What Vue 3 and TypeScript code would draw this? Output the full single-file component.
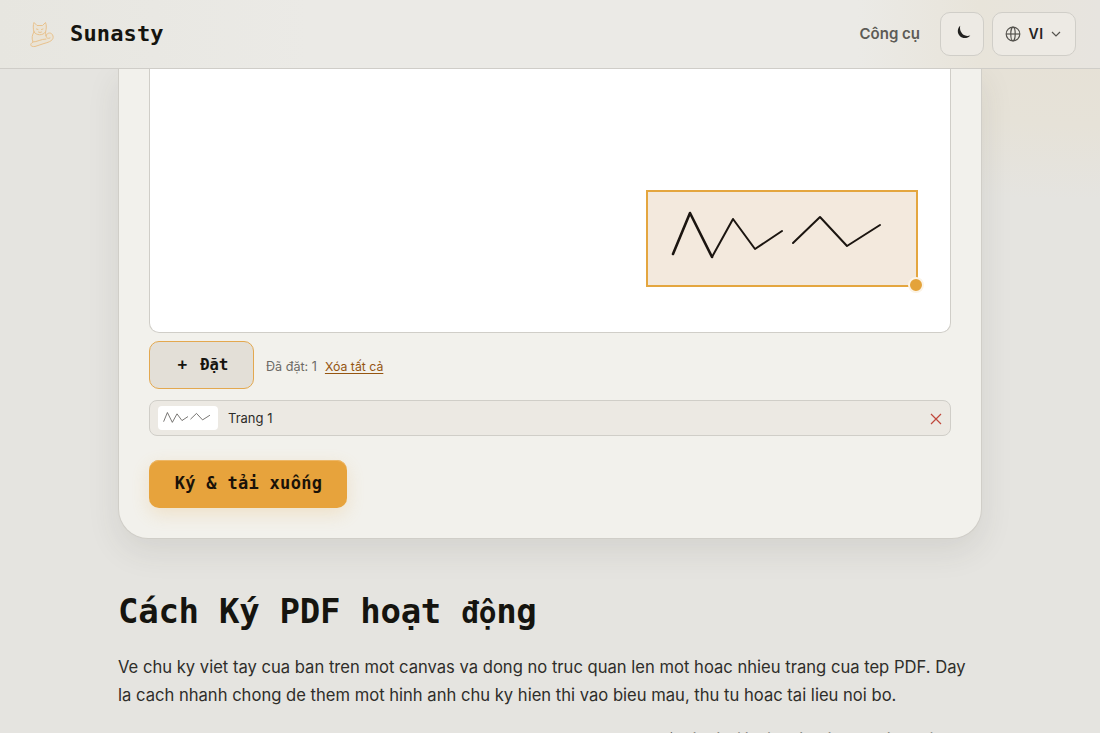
<script setup lang="ts">
const signature: string[] = [
  'M25 62 L42 21 L64 65',
  'M64 65 L85 27 L107 57 L134 39',
  'M145 51 L172 25 L199 54 L232 33',
]
</script>

<template>
  <div class="page">
    <header class="bar">
      <a class="brand">
        <svg class="cat" viewBox="0 0 36 36" fill="none" stroke="#e9b672" stroke-width="1" stroke-linejoin="round" stroke-linecap="round">
          <path fill="#ebe3d3" d="M10 16 C9 13 9 9 10 6.500 L13 9.500 H18.500 L21.500 6.500 C22.700 9 22.500 13 21.500 16 L22 20 C23 16 28 16 29 20 C30 24 26 26 20 27.500 L11 30.500 C6 31 5.500 28 9 26 C7.500 22 8 19 10 16Z" />
          <path d="M10 16 C12 19.500 19 20 21.500 16 M9 26 C13 26 17 23 22 23 M22 20 C22 22 24 23 26 22 M12.500 13 L14 13.500 M19 13 L17.500 13.500 M14.500 16 L16 16.500 L17.500 16" />
        </svg>
        <span>Sunasty</span>
      </a>
      <nav class="nav">
        <a class="tools">Công cụ</a>
        <button class="btn moon" aria-label="Theme">
          <svg width="16" height="16" viewBox="0 0 16 16"><path d="M4.200 .8 C1.200 3.500 1 8.200 3.800 11 C6.800 14 11.500 13.600 14.300 10.400 C11.300 11.500 8.200 10.700 6.300 8.700 C4.200 6.500 3.600 3.500 4.200 .8Z" fill="#22211f" /></svg>
        </button>
        <button class="btn lang">
          <svg width="16" height="16" viewBox="0 0 16 16" fill="none" stroke="#55534e" stroke-width="1.200"><circle cx="8" cy="8" r="6.800" /><ellipse cx="8" cy="8" rx="2.200" ry="6.800" /><path d="M1.200 8H14.800" /></svg>
          <span>VI</span>
          <svg width="10" height="10" viewBox="0 0 10 10" fill="none" stroke="#55534e" stroke-width="1.200"><path d="M1 3 L5 7 L9 3" /></svg>
        </button>
      </nav>
    </header>

    <main class="main">
      <section class="card">
        <div class="sheet">
          <div class="stamp">
            <svg width="268" height="93" viewBox="0 0 268 93" fill="none" stroke="#1b1510" stroke-linejoin="round" stroke-linecap="round">
              <path v-for="(d, i) in signature" :key="i" :d="d" :stroke-width="i === 0 ? 2.6 : 2" />
            </svg>
            <i class="handle"></i>
          </div>
        </div>
        <div class="actions">
          <button class="place"><span>+</span><span><span class="small">Đặ</span>t</span></button>
          <span class="count">Đã đặt: 1</span>
          <a class="clear">Xóa tất cả</a>
        </div>
        <div class="row">
          <span class="thumb">
            <svg width="60" height="24" viewBox="0 0 268 107" fill="none" stroke="#55524e" stroke-width="3.500">
              <path v-for="(d, i) in signature" :key="i" :d="d" transform="translate(0 8)" />
            </svg>
          </span>
          <span class="label">Trang 1</span>
          <svg class="remove" width="12" height="12" viewBox="0 0 12 12" stroke="#c0473c" stroke-width="1.200"><path d="M1 1L11 11M11 1L1 11" /></svg>
        </div>
        <button class="submit">Ký &amp; tải xuống</button>
      </section>

      <h2>Cách Ký PDF hoạt <span class="narrow">độ</span>ng</h2>
      <p>Ve chu ky viet tay cua ban tren mot canvas va dong no truc quan len mot hoac nhieu trang cua tep PDF. Day la cach nhanh chong de them mot hinh anh chu ky hien thi vao bieu mau, thu tu hoac tai lieu noi bo.</p>
      <p class="next">Cong cu nay khong tao chu ky so co chung thuc. Neu ban can mot chữ ký có giá trị pháp lý, hãy dùng dịch vụ</p>
    </main>
  </div>
</template>

<style>
html, body { margin: 0; overflow: hidden; }
</style>

<style scoped>
.page {
  height: 733px;
  overflow: hidden;
  background: radial-gradient(ellipse 420px 150px at 1080px 50px, #e6e1d6 0%, #e6e2d8 50%, rgba(229, 228, 224, 0) 100%), #e5e4e0;
  color: #15140f;
  font-family: Inter, "Liberation Sans", sans-serif;
}
.page * { box-sizing: border-box; }
button { font: inherit; color: inherit; padding: 0; }
.bar {
  position: relative;
  height: 69px;
  padding: 0 24px 1px 24px;
  display: flex;
  align-items: center;
  justify-content: space-between;
  border-bottom: 1px solid #cfcdc8;
  background: linear-gradient(90deg, #e7e6e0 0%, #ebeae6 28%, #ebeae6 78%, #e8e4da 89%, #e7e4df 100%);
}
.brand {
  display: flex;
  align-items: center;
  gap: 10px;
  font: 700 22px/1 "DejaVu Sans Mono", monospace;
  letter-spacing: .15px;
}
.cat { width: 36px; height: 36px; opacity: .75; }
.nav { display: flex; align-items: center; }
.tools { font-size: 15px; font-weight: 600; color: #5d5b56; margin-right: 20px; }
.btn {
  height: 44px;
  border: 1px solid #d0cec8;
  border-radius: 10px;
  background: #edeae4;
  display: flex;
  align-items: center;
  justify-content: center;
}
.moon { width: 44px; margin-right: 8px; padding-left: 3px; padding-bottom: 1px; }
.lang { width: 84px; gap: 8px; font-size: 14px; font-weight: 600; letter-spacing: .4px; color: #24231f; }
.lang svg:first-child { margin-left: -2px; }
.main { width: 864px; margin: 0 auto; }
.card {
  height: 470px;
  padding: 0 30px;
  border: 1px solid #d0cec8;
  border-top: 0;
  border-radius: 0 0 30px 30px;
  background: #f2f1ec;
  box-shadow: 0 12px 32px rgba(60, 55, 45, .1);
}
.sheet {
  height: 264px;
  border: 1px solid #d0cec8;
  border-top: 0;
  border-radius: 0 0 10px 10px;
  background: #fff;
  display: flex;
  justify-content: flex-end;
  align-items: flex-end;
  padding: 0 32px 45px 0;
}
.stamp {
  position: relative;
  width: 272px;
  height: 97px;
  border: 2px solid #e4a63f;
  background: #f3e9dd;
}
.stamp svg { display: block; }
.handle {
  position: absolute;
  right: -8px;
  bottom: -8px;
  width: 16px;
  height: 16px;
  border-radius: 50%;
  border: 2px solid #fbf3e6;
  background: #e4a33a;
}
.actions { display: flex; align-items: center; margin-top: 8px; }
.place {
  width: 105px;
  height: 48px;
  border: 1px solid #e3a84f;
  border-radius: 10px;
  background: #e3dfd7;
  display: flex;
  align-items: center;
  justify-content: center;
  gap: 13px;
  padding-left: 3px;
  font: 700 16px/1 "DejaVu Sans Mono", monospace;
}
.small { font-size: 15.5px; }
.count { margin: 2px 0 0 12px; font-size: 12.6px; color: #6c6a65; }
.clear { margin: 2px 0 0 8px; font-size: 12.3px; color: #955510; text-decoration: underline; text-underline-offset: 2px; }
.row {
  height: 36px;
  margin-top: 11px;
  padding: 0 8px;
  border: 1px solid #d0cec8;
  border-radius: 8px;
  background: #ece9e3;
  display: flex;
  align-items: center;
  font-size: 13px;
  color: #2e2c29;
}
.thumb { width: 60px; height: 24px; border-radius: 4px; background: #fff; }
.thumb svg { display: block; }
.label { margin-left: 10px; flex: 1; }
.remove { margin-top: 1px; }
.submit {
  width: 198px;
  height: 48px;
  margin-top: 24px;
  padding: 0 0 1px 1px;
  border: 0;
  border-radius: 10px;
  background: #e7a33c;
  color: #1a1208;
  box-shadow: 0 6px 18px rgba(231, 163, 60, .2), inset 0 1px 0 #edb767;
  font: 700 17px/1 "DejaVu Sans Mono", monospace;
  letter-spacing: .3px;
}
h2 {
  margin: 49px 0 0;
  font: 700 34px/46px "DejaVu Sans Mono", monospace;
  letter-spacing: -.28px;
}
.narrow { font-size: 29.5px; line-height: 1; letter-spacing: -.3px; }
p { margin: 19px 0 0; font-size: 16.6px; line-height: 28px; color: #2f2e2a; }
.next { margin-top: 17px; white-space: nowrap; }
</style>
